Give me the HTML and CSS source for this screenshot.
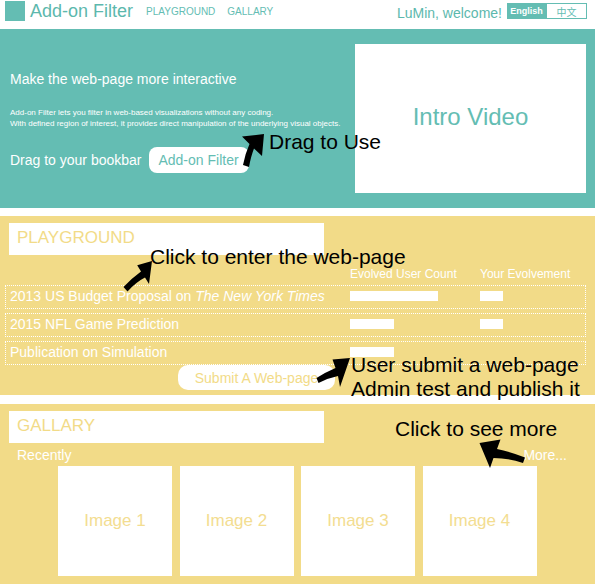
FILE: index.html
```html
<!DOCTYPE html>
<html lang="en">
<head>
<meta charset="utf-8">
<title>Add-on Filter</title>
<link rel="stylesheet" href="styles.css">
</head>
<body>
<div class="page">
  <header class="topbar">
    <div class="logo"></div>
    <div class="brand">Add-on Filter</div>
    <nav class="nav">
      <a class="nav-link">PLAYGROUND</a>
      <a class="nav-link">GALLARY</a>
    </nav>
    <div class="user">
      <span class="welcome">LuMin, welcome!</span>
      <div class="lang">
        <span class="lang-btn lang-active">English</span>
        <span class="lang-btn lang-cn">中文</span>
      </div>
    </div>
  </header>

  <section class="hero">
    <div class="hero-left">
      <p class="hero-title">Make the web-page more interactive</p>
      <p class="hero-desc">Add-on Filter lets you filter in web-based visualizations without any coding.<br>With defined region of interest, it provides direct manipulation of the underlying visual objects.</p>
      <div class="drag-row">
        <span class="drag-label">Drag to your bookbar</span>
        <span class="bookmarklet">Add-on Filter</span>
      </div>
    </div>
    <div class="video">Intro Video</div>

    <span class="note note-drag">Drag to Use</span>
    <svg class="arrow arrow-drag" width="36" height="40" viewBox="0 0 36 40"><path d="M28,4 L6,6.5 L13.5,14 Q9,24 7,35 L13,37 Q15,26 18,18.5 L26,26 Z"/></svg>
  </section>

  <section class="playground">
    <div class="section-title">PLAYGROUND</div>
    <div class="cols">
      <span></span>
      <span>Evolved User Count</span>
      <span>Your Evolvement</span>
    </div>
    <div class="rows">
      <div class="row">
        <span>2013 US Budget Proposal on <i>The New York Times</i></span>
        <span class="bar bar-long"></span>
        <span class="bar bar-small"></span>
      </div>
      <div class="row">
        <span>2015 NFL Game Prediction</span>
        <span class="bar bar-mid"></span>
        <span class="bar bar-small"></span>
      </div>
      <div class="row">
        <span>Publication on Simulation</span>
        <span class="bar bar-mid"></span>
        <span></span>
      </div>
    </div>
    <div class="submit">Submit A Web-page</div>

    <span class="note note-enter">Click to enter the web-page</span>
    <svg class="arrow arrow-enter" width="36" height="38" viewBox="0 0 36 38"><path d="M32,3 L17.2,7.2 L21,13.5 Q12,20 3.5,29 L7.5,33.5 Q16,24 25,19.5 L29,26 Z"/></svg>
    <span class="note note-submit">User submit a web-page<br>Admin test and publish it</span>
    <svg class="arrow arrow-submit" width="40" height="36" viewBox="0 0 40 36"><path d="M36,4 L18.5,5.5 L21.5,14 Q12,18 2.5,24 L4.5,29 Q14,24 24,22 L26,33 Z"/></svg>
  </section>

  <section class="gallery">
    <div class="section-title">GALLARY</div>
    <div class="gal-sub">
      <span>Recently</span>
      <span>More...</span>
    </div>
    <div class="images">
      <div class="image">Image 1</div>
      <div class="image">Image 2</div>
      <div class="image">Image 3</div>
      <div class="image">Image 4</div>
    </div>

    <span class="note note-more">Click to see more</span>
    <svg class="arrow arrow-more" width="50" height="32" viewBox="0 0 50 32"><path d="M1.5,5 L22.5,1.5 L19,11 Q33,14 47,19.5 L45,25 Q30,20 15.5,20 L12,30 Z"/></svg>
  </section>
</div>
</body>
</html>
```

FILE: styles.css
```css
* { box-sizing: border-box; margin: 0; padding: 0; }

body {
  width: 596px;
  height: 586px;
  overflow: hidden;
  background: #fff;
  font-family: "Liberation Sans", Arial, sans-serif;
}

.page { width: 595px; }

/* top bar */
.topbar {
  display: flex;
  align-items: flex-start;
  height: 29px;
}
.logo {
  width: 20px;
  height: 20px;
  background: #64bdb3;
  margin: 1px 0 0 5px;
}
.brand {
  font-size: 18px;
  line-height: 20px;
  color: #5cb8ad;
  margin: 0.5px 0 0 5px;
}
.nav {
  display: flex;
  gap: 12px;
  margin: 6.4px 0 0 13px;
  font-size: 10px;
  line-height: 12px;
}
.nav-link { color: #64bdb3; }
.user {
  margin-left: auto;
  display: flex;
  align-items: flex-start;
}
.welcome {
  font-size: 14px;
  line-height: 16px;
  color: #5cb8ad;
  margin-top: 5px;
}
.lang {
  display: flex;
  margin: 3px 8px 0 5px;
}
.lang-btn {
  height: 16px;
  display: flex;
  align-items: center;
  justify-content: center;
}
.lang-active {
  width: 39px;
  background: #64bdb3;
  color: #fff;
  font-size: 9px;
  font-weight: bold;
}
.lang-cn {
  width: 41px;
  border: 1px solid #64bdb3;
  color: #64bdb3;
  font-size: 10px;
  font-family: "Liberation Sans", "Noto Sans CJK SC", sans-serif;
}

/* hero */
.hero {
  position: relative;
  height: 179px;
  background: #64bdb3;
  display: flex;
  justify-content: space-between;
  padding: 15px 9px 15px 10px;
  color: #fff;
}
.hero-title {
  font-size: 14px;
  line-height: 16px;
  margin-top: 27.4px;
}
.hero-desc {
  font-size: 8px;
  line-height: 10.5px;
  margin-top: 20.7px;
}
.drag-row {
  display: flex;
  align-items: center;
  gap: 7px;
  margin-top: 18px;
}
.drag-label {
  font-size: 14px;
  line-height: 16px;
}
.bookmarklet {
  width: 100px;
  height: 26px;
  border-radius: 8px;
  background: #fff;
  color: #64bdb3;
  font-size: 14px;
  display: flex;
  align-items: center;
  justify-content: center;
}
.video {
  width: 231px;
  height: 149px;
  padding-bottom: 4px;
  background: #fff;
  color: #64bdb3;
  font-size: 24px;
  display: flex;
  align-items: center;
  justify-content: center;
}

/* annotations */
.note {
  position: absolute;
  color: #000;
  font-size: 21px;
  line-height: 21px;
  white-space: nowrap;
  z-index: 2;
}
.arrow {
  position: absolute;
  z-index: 3;
  fill: #000;
}
.note-drag { left: 269px; top: 101.5px; }
.arrow-drag { left: 236px; top: 101px; }
.note-enter { left: 150px; top: 29.5px; }
.arrow-enter { left: 120px; top: 42px; }
.note-submit { left: 351px; top: 137.4px; line-height: 24px; }
.arrow-submit { left: 314px; top: 138px; }
.note-more { left: 395px; top: 13.9px; }
.arrow-more { left: 478px; top: 34px; }

/* sections */
.playground,
.gallery {
  position: relative;
  background: #f2db88;
  padding-top: 7px;
  color: #fff;
}
.playground { margin-top: 8px; height: 179px; }
.gallery { margin-top: 9px; height: 180px; }

.section-title {
  width: 315px;
  height: 32px;
  margin-left: 9px;
  padding: 0 0 2px 8px;
  background: #fff;
  color: #f2db88;
  font-size: 17px;
  display: flex;
  align-items: center;
}

.cols {
  display: grid;
  grid-template-columns: 340px 130px auto;
  margin: 11.5px 0 0 10px;
  font-size: 12px;
  line-height: 14px;
}
.rows {
  display: flex;
  flex-direction: column;
  gap: 4px;
  margin: 4.5px 0 0 5px;
  width: 581px;
}
.row {
  height: 24px;
  border: 1px dotted #fff;
  padding: 0 0 2px 4px;
  display: grid;
  grid-template-columns: 340px 130px auto;
  align-items: center;
  font-size: 14px;
  line-height: 16px;
}
.bar {
  display: block;
  height: 10px;
  background: #fff;
}
.bar-long { width: 88px; }
.bar-mid { width: 44px; }
.bar-small { width: 23px; }

.submit {
  width: 157px;
  height: 25px;
  margin-left: 178px;
  border-radius: 10px;
  background: #fff;
  color: #f2db88;
  font-size: 14px;
  display: flex;
  align-items: center;
  justify-content: center;
}

.gal-sub {
  display: flex;
  justify-content: space-between;
  margin-top: 4.4px;
  padding: 0 28px 0 17px;
  font-size: 14px;
  line-height: 16px;
}
.images {
  display: flex;
  gap: 7.5px;
  margin: 2.6px 0 0 58px;
}
.image {
  width: 114px;
  height: 110px;
  background: #fff;
  color: #f3dd91;
  font-size: 17px;
  display: flex;
  align-items: center;
  justify-content: center;
}
```
